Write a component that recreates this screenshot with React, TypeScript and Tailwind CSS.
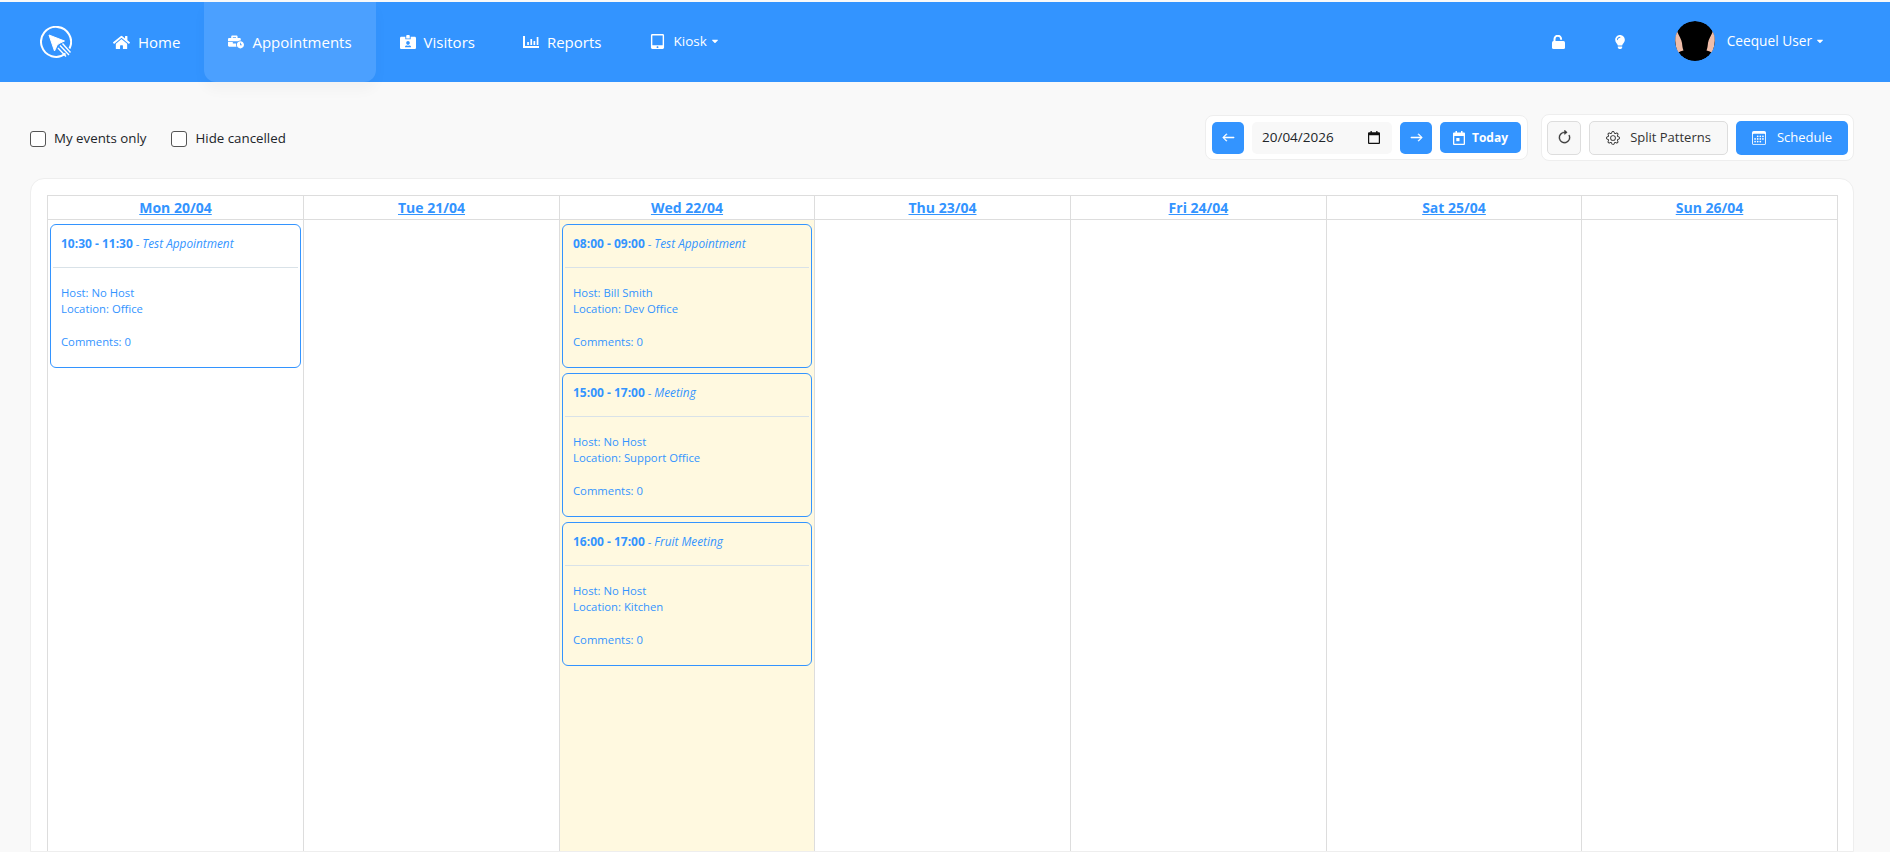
import { FaHome, FaBusinessTime, FaIdCardAlt, FaTabletAlt, FaLightbulb, FaCaretDown } from "react-icons/fa";
import { BsArrowLeft, BsArrowRight, BsArrowClockwise, BsGear, BsCalendar3 } from "react-icons/bs";

const days = [
  { label: "Mon 20/04", today: false, events: [{ time: "10:30 - 11:30", title: "Test Appointment", host: "No Host", location: "Office" }] },
  { label: "Tue 21/04", today: false, events: [] },
  {
    label: "Wed 22/04",
    today: true,
    events: [
      { time: "08:00 - 09:00", title: "Test Appointment", host: "Bill Smith", location: "Dev Office" },
      { time: "15:00 - 17:00", title: "Meeting", host: "No Host", location: "Support Office" },
      { time: "16:00 - 17:00", title: "Fruit Meeting", host: "No Host", location: "Kitchen" },
    ],
  },
  { label: "Thu 23/04", today: false, events: [] },
  { label: "Fri 24/04", today: false, events: [] },
  { label: "Sat 25/04", today: false, events: [] },
  { label: "Sun 26/04", today: false, events: [] },
];

function Logo() {
  return (
    <svg width="32" height="32" viewBox="0 0 32 32" fill="none" stroke="white">
      <path d="M25.5 27.5A15 15 0 1 1 29.5 22.5" strokeWidth="2" />
      <path d="M9 9L24.5 15L19 17.5L17 19.5L14.5 25Z" fill="white" stroke="white" strokeWidth="1" strokeLinejoin="round" />
      <path d="M20 19.5L29 29M18 22L26 30.5M22.5 17.5L30.5 26.5" strokeWidth="1.4" />
    </svg>
  );
}

function Avatar() {
  return (
    <svg width="40" height="40" viewBox="0 0 40 40" className="rounded-full">
      <circle cx="20" cy="20" r="20" fill="black" />
      <path d="M0 14L2 10C4 15 6.5 18 7 22C7.3 25 7.5 27 8.5 29.5C6 30 4 31 3 32Q0 26 0 14Z" fill="#efbda9" />
      <path d="M40 14L38 10C36 15 33.5 18 33 22C32.7 25 32.5 27 31.5 29.5C34 30 36 31 37 32Q40 26 40 14Z" fill="#efbda9" />
    </svg>
  );
}

function ReportsIcon() {
  return (
    <svg width="16" height="12" viewBox="0 0 16 12" fill="white">
      <path d="M0 0h2v10h14v2H0z" />
      <path d="M4.2 6h1.7v3H4.2zM7.4 3h1.7v6H7.4zM10.5 5h1.7v4h-1.7zM13.7 1h1.7v8h-1.7z" />
    </svg>
  );
}

function LockIcon() {
  return (
    <svg width="13" height="14" viewBox="0 0 13 14" fill="white">
      <rect x="0" y="6" width="13" height="8" rx="1.5" />
      <path d="M2.5 7V4a3.3 3.3 0 0 1 6.6 0v0.8" fill="none" stroke="white" strokeWidth="2" />
    </svg>
  );
}

function TodayIcon() {
  return (
    <svg width="12" height="14" viewBox="0 0 12 14" fill="white">
      <path fillRule="evenodd" d="M2.5 0h1.5v1.5h4V0h1.5v1.5H11a1 1 0 0 1 1 1V13a1 1 0 0 1-1 1H1a1 1 0 0 1-1-1V2.5a1 1 0 0 1 1-1h1.5zM1.3 5v7.7h9.4V5z" />
      <path d="M3.3 7h3.2v3.2H3.3z" />
    </svg>
  );
}

function DateIcon() {
  return (
    <svg width="12" height="13" viewBox="0 0 12 13" fill="#111">
      <path fillRule="evenodd" d="M2.5 0h1.3v1.2h4.4V0h1.3v1.2H11a1 1 0 0 1 1 1V12a1 1 0 0 1-1 1H1a1 1 0 0 1-1-1V2.2a1 1 0 0 1 1-1h1.5zM1.2 4.2v7.6h9.6V4.2z" />
    </svg>
  );
}

function NavItem({ icon, label, active }: { icon: React.ReactNode; label: string; active?: boolean }) {
  return (
    <a className={`flex items-center gap-2 px-6 h-full rounded-b-xl text-white text-[15px] ${active ? "bg-[#4ba0ff] shadow-[0_8px_14px_rgba(0,0,0,0.03)]" : ""}`}>
      {icon}
      {label}
    </a>
  );
}

function EventCard({ event }: { event: { time: string; title: string; host: string; location: string } }) {
  return (
    <div className="mx-[2px] mb-[5px] h-[144px] border border-[#3394ff] rounded-[6px] text-[11.3px] leading-4 text-[#3394ff]">
      <div className="h-[43px] px-[8px] mx-[2px] pt-[10px] border-b border-[#d9e2e8]">
        <b className="text-[12px]">{event.time}</b> - <i className="text-[11.8px]">{event.title}</i>
      </div>
      <div className="px-[10px] pt-[17px]">
        <div>Host: {event.host}</div>
        <div>Location: {event.location}</div>
        <div className="mt-[17px]">Comments: 0</div>
      </div>
    </div>
  );
}

export default function App() {
  return (
    <div className="h-screen overflow-hidden flex flex-col bg-[#f9f9f9] pt-[2px] font-['Open_Sans','Noto_Sans',sans-serif]">
      {/* Header */}
      <header className="flex items-center h-[80px] bg-[#3394ff] pl-10 pr-[65px] shrink-0">
        <div className="mr-[17px]">
          <Logo />
        </div>
        <NavItem icon={<FaHome size={17} />} label="Home" />
        <NavItem icon={<FaBusinessTime size={16} />} label="Appointments" active />
        <NavItem icon={<FaIdCardAlt size={16} />} label="Visitors" />
        <NavItem icon={<ReportsIcon />} label="Reports" />
        <a className="flex items-center pl-[25px] text-white text-[13.5px] -mt-[2px]">
          <FaTabletAlt size={15} className="mr-2" />
          Kiosk
          <FaCaretDown size={10} className="ml-[3px]" />
        </a>

        <div className="ml-auto flex items-center text-white">
          <LockIcon />
          <FaLightbulb size={14} className="ml-[48px]" />
          <div className="ml-[48px] -mt-[2px]">
            <Avatar />
          </div>
          <span className="ml-3 text-[13.7px] -mt-[2px]">Ceequel User</span>
          <FaCaretDown size={10} className="ml-[3px] -mt-[2px]" />
        </div>
      </header>

      <main className="flex-1 min-h-0 flex flex-col pl-[30px] pr-[36px]">
        {/* Toolbar */}
        <div className="flex items-center h-[47px] mt-8 shrink-0">
          <label className="flex items-center gap-2 mt-[2px] text-[13.3px] text-[#212529]">
            <input type="checkbox" className="appearance-none w-4 h-4 bg-white border border-[#555] rounded-[3px]" />
            My events only
          </label>
          <label className="flex items-center gap-[9px] mt-[2px] text-[13.3px] text-[#212529] ml-6">
            <input type="checkbox" className="appearance-none w-4 h-4 bg-white border border-[#555] rounded-[3px]" />
            Hide cancelled
          </label>

          <div className="ml-auto flex items-center gap-2 h-[45px] px-[6px] bg-white border border-[#eee] rounded-lg">
            <button className="flex items-center justify-center w-8 h-8 bg-[#3394ff] text-white rounded-[5px]">
              <BsArrowLeft size={13} strokeWidth={0.8} />
            </button>
            <div className="flex items-center justify-between w-[140px] h-8 pl-[10px] pr-[12px] bg-[#f8f8f8] rounded-[5px] text-[13.5px] text-[#212529]">
              20/04/2026
              <DateIcon />
            </div>
            <button className="flex items-center justify-center w-8 h-8 bg-[#3394ff] text-white rounded-[5px]">
              <BsArrowRight size={13} strokeWidth={0.8} />
            </button>
            <button className="flex items-center justify-center gap-[7px] w-[81px] h-[31px] bg-[#3394ff] text-white rounded-[5px] text-[12px] font-bold">
              <TodayIcon />
              Today
            </button>
          </div>

          <div className="ml-[13px] flex items-center gap-2 h-[47px] px-[5px] bg-white border border-[#eee] rounded-lg">
            <button className="flex items-center justify-center w-[34px] h-[34px] bg-[#f8f8f8] border border-[#ddd] rounded-[5px] text-[#333]">
              <BsArrowClockwise size={15} strokeWidth={0.4} />
            </button>
            <button className="flex items-center justify-center gap-[10px] w-[139px] h-[34px] bg-[#f8f8f8] border border-[#ddd] rounded-[5px] text-[13px] text-[#333]">
              <BsGear size={14} />
              Split Patterns
            </button>
            <button className="flex items-center justify-center gap-[11px] w-[112px] h-[34px] bg-[#3394ff] text-white rounded-[5px] text-[13px]">
              <BsCalendar3 size={14} />
              Schedule
            </button>
          </div>
        </div>

        {/* Calendar */}
        <div className="flex-1 min-h-0 mt-[17px] bg-white border border-[#eee] rounded-t-[14px] pt-4 pl-4 pr-[15px] overflow-hidden">
          <div className="grid grid-cols-[256px_256px_255px_256px_256px_255px_256px] h-[900px] border-t border-r border-[#ddd]">
            {days.map((day) => (
              <div key={day.label} className={`flex flex-col border-l border-[#ddd] ${day.today ? "bg-[#fff9e0]" : ""}`}>
                <div className="h-[24px] flex items-center justify-center bg-white border-b border-[#ddd]">
                  <a className="text-[14px] font-bold underline text-[#3394ff]">{day.label}</a>
                </div>
                <div className="pt-[4px]">
                  {day.events.map((event) => (
                    <EventCard key={event.time} event={event} />
                  ))}
                </div>
              </div>
            ))}
          </div>
        </div>
      </main>
    </div>
  );
}
